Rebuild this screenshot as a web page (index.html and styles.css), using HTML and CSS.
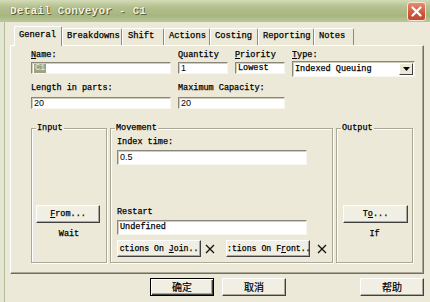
FILE: index.html
```html
<!DOCTYPE html>
<html lang="zh">
<head>
    <meta charset="UTF-8">
    <title>Detail Conveyor - C1</title>
    <link rel="stylesheet" href="styles.css">
</head>
<body>
    <div class="window">
        <div class="titlebar">
            <span class="title">Detail Conveyor - C1</span>
            <span class="close-btn">
                <svg width="11" height="11" viewBox="0 0 11 11"><path d="M1.5 1.5 L9.5 9.5 M9.5 1.5 L1.5 9.5" stroke="#fff" stroke-width="2.2" stroke-linecap="round"/></svg>
            </span>
        </div>

        <div class="client">
            <div class="tabs">
                <div class="tab active w-general">General</div>
                <div class="tab w-breakdowns">Breakdowns</div>
                <div class="tab w-shift">Shift</div>
                <div class="tab w-actions">Actions</div>
                <div class="tab w-costing">Costing</div>
                <div class="tab w-reporting">Reporting</div>
                <div class="tab w-notes">Notes</div>
            </div>

            <div class="panel">
                <div class="row-top">
                    <label class="lbl"><u>N</u>ame:</label>
                    <label class="lbl">Quantity</label>
                    <label class="lbl"><u>P</u>riority</label>
                    <label class="lbl"><u>T</u>ype:</label>
                    <div class="field"><span class="selected-text">C1</span></div>
                    <div class="field num">1</div>
                    <div class="field">Lowest</div>
                    <div class="select">
                        <span>Indexed Queuing</span>
                        <span class="drop-btn">
                            <svg width="7" height="4" viewBox="0 0 7 4"><path d="M0 0 H7 L3.5 4 Z" fill="#000"/></svg>
                        </span>
                    </div>
                </div>

                <div class="row-second">
                    <label class="lbl">Length in parts:</label>
                    <label class="lbl">Maximum Capacity:</label>
                    <div class="field num">20</div>
                    <div class="field num">20</div>
                </div>

                <div class="groups">
                    <fieldset class="group group-input">
                        <legend>Input</legend>
                        <button class="btn side-btn"><u>F</u>rom...</button>
                        <div class="state">Wait</div>
                    </fieldset>

                    <fieldset class="group group-movement">
                        <legend>Movement</legend>
                        <div class="movement-body">
                            <label class="lbl">Index time:</label>
                            <div class="field tall num">0.5</div>
                            <label class="lbl restart-lbl">Restart</label>
                            <div class="field tall">Undefined</div>
                            <div class="action-row">
                                <button class="btn action-btn">ctions On <u>J</u>oin..</button>
                                <span class="clear-x">
                                    <svg width="10" height="10" viewBox="0 0 10 10"><path d="M1 1 L9 9 M9 1 L1 9" stroke="#111" stroke-width="1.3"/></svg>
                                </span>
                                <button class="btn action-btn second">:tions On F<u>r</u>ont..</button>
                                <span class="clear-x">
                                    <svg width="10" height="10" viewBox="0 0 10 10"><path d="M1 1 L9 9 M9 1 L1 9" stroke="#111" stroke-width="1.3"/></svg>
                                </span>
                            </div>
                        </div>
                    </fieldset>

                    <fieldset class="group group-output">
                        <legend>Output</legend>
                        <button class="btn side-btn to-btn">T<u>o</u>...</button>
                        <div class="state">If</div>
                    </fieldset>
                </div>
            </div>

            <div class="dialog-buttons">
                <button class="btn dlg-btn default">确定</button>
                <button class="btn dlg-btn">取消</button>
                <button class="btn dlg-btn help">帮助</button>
            </div>
        </div>
    </div>
</body>
</html>
```

FILE: styles.css
```css
* {
    margin: 0;
    padding: 0;
    box-sizing: border-box;
}

body {
    width: 430px;
    height: 302px;
    overflow: hidden;
    background: #ece9d8;
    font-family: 'Liberation Mono', 'DejaVu Sans Mono', monospace;
    font-size: 8.5px;
    color: #000;
    -webkit-text-stroke: 0.25px #000;
}

.window {
    height: 302px;
    display: flex;
    flex-direction: column;
}

.titlebar {
    height: 22px;
    display: flex;
    align-items: center;
    padding: 0 4px 0 10px;
    background: linear-gradient(#d3dbb6, #b5c190 30%, #a7b57f 70%, #bac69b);
}

.title {
    font-weight: bold;
    font-size: 11px;
    color: #f4f1de;
    -webkit-text-stroke: 0;
    text-shadow: 1px 1px 0 #56603a, -0.5px -0.5px 0 #7b8658;
    letter-spacing: 0.2px;
}

.close-btn {
    margin-left: auto;
    width: 19px;
    height: 19px;
    border: 1px solid #f3e6d8;
    border-radius: 3px;
    background: linear-gradient(#e98a70, #d0553a 60%, #c24a30);
    display: flex;
    align-items: center;
    justify-content: center;
}

.client {
    flex: 1;
    padding: 0 6px 0 10px;
    background: linear-gradient(to right, #e3e7d4 0 4px, #b4bd9a 4px 5px, #ece9d8 5px);
}

/* tabs */
.tabs {
    display: flex;
    align-items: flex-end;
    height: 23px;
    padding-left: 4px;
}

.tab {
    height: 17px;
    line-height: 15px;
    padding-left: 4px;
    font-size: 8.8px;
    border-top: 1px solid #fff;
    border-left: 1px solid #fff;
    border-right: 1px solid #8d8a7e;
    border-radius: 2px 2px 0 0;
    white-space: nowrap;
}

.tab.active {
    height: 20px;
    line-height: 17px;
    margin-bottom: -1px;
    position: relative;
    z-index: 1;
    background: #ece9d8;
}

.w-general { width: 48px; }
.w-breakdowns { width: 60px; }
.w-shift { width: 42px; padding-left: 5px; }
.w-actions { width: 46px; }
.w-costing { width: 48px; }
.w-reporting { width: 56px; }
.w-notes { width: 40px; }

/* panel */
.panel {
    width: 414px;
    height: 229px;
    border: 1px solid;
    border-color: #fff #716f64 #716f64 #fff;
    box-shadow: inset -1px -1px 0 #aca899;
    padding: 4px 0 0 20px;
}

.lbl {
    display: block;
    height: 11px;
    line-height: 11px;
    white-space: nowrap;
    overflow: hidden;
}

.field {
    height: 12px;
    background: #fff;
    border: 1px solid;
    border-color: #8a877a #f6f5ee #f6f5ee #8a877a;
    box-shadow: inset 1px 1px 0 #cfccbd;
    padding-left: 2px;
    line-height: 10px;
    white-space: nowrap;
    overflow: hidden;
}

.field.num {
    font-family: 'Liberation Sans', Arial, sans-serif;
    font-size: 9px;
    -webkit-text-stroke: 0;
}

.field.tall {
    height: 15px;
    width: 190px;
    line-height: 13px;
}

.selected-text {
    display: inline-block;
    background: #9ea384;
    color: #eceedd;
    -webkit-text-stroke: 0;
    padding: 0 1px;
    line-height: 9px;
}

.row-top {
    display: grid;
    grid-template-columns: 140px 50px 50px 123px;
    grid-template-rows: 11px 12px;
    column-gap: 7px;
    row-gap: 1px;
}

.select {
    height: 16px;
    margin-top: -1px;
    display: flex;
    align-items: center;
    background: #fff;
    border: 1px solid;
    border-color: #8a877a #f6f5ee #f6f5ee #8a877a;
    box-shadow: inset 1px 1px 0 #cfccbd;
    padding-left: 2px;
    white-space: nowrap;
}

.drop-btn {
    margin-left: auto;
    margin-right: 1px;
    width: 14px;
    height: 12px;
    background: #ece9d8;
    border: 1px solid;
    border-color: #fff #404040 #404040 #fff;
    display: flex;
    align-items: center;
    justify-content: center;
}

.row-second {
    display: grid;
    grid-template-columns: 140px 107px;
    grid-template-rows: 11px 12px;
    column-gap: 7px;
    row-gap: 3px;
    margin-top: 9px;
}

/* groups */
.groups {
    display: flex;
    gap: 3px;
    margin-top: 14px;
}

.group {
    height: 140px;
    border: 1px solid #aca899;
    box-shadow: inset 1px 1px 0 #fff, 1px 1px 0 #fff;
    padding: 0 4px;
    display: flex;
    flex-direction: column;
}

.group legend {
    padding: 0 1px;
    line-height: 10px;
    font-size: 8.5px;
}

.group-input { width: 76px; }
.group-movement { width: 223px; }
.group-output { width: 77px; }

.btn {
    font-family: 'Liberation Mono', 'DejaVu Sans Mono', monospace;
    font-size: 8.5px;
    color: #000;
    background: #f1efe4;
    border: 1px solid;
    border-color: #fff #404040 #404040 #fff;
    box-shadow: inset -1px -1px 0 #aca899;
    white-space: nowrap;
    overflow: hidden;
    padding: 0;
}

.side-btn {
    width: 64px;
    height: 18px;
    margin-top: 72px;
}

.to-btn {
    width: 65px;
    margin-left: 2px;
}

.state {
    margin-top: 6px;
    line-height: 10px;
    text-align: center;
}

.movement-body {
    padding: 4px 0 0 2px;
}

.movement-body .field.tall {
    margin-top: 3px;
}

.restart-lbl {
    margin-top: 42px;
    height: 10px;
    line-height: 10px;
}

.movement-body .lbl:first-child {
    height: 10px;
    line-height: 10px;
}

.action-row {
    display: flex;
    align-items: center;
    margin-top: 5px;
}

.action-btn {
    width: 84px;
    height: 17px;
    text-align: center;
    font-size: 8.2px;
}

.action-btn.second {
    margin-left: 11px;
}

.clear-x {
    display: flex;
    margin-left: 4px;
}

.action-btn.second + .clear-x {
    margin-left: 7px;
}

/* dialog buttons */
.dialog-buttons {
    display: flex;
    gap: 8px;
    margin-top: 4px;
    padding-left: 140px;
}

.dlg-btn {
    width: 64px;
    height: 18px;
    font-family: 'Noto Sans CJK SC', sans-serif;
    font-size: 10px;
    line-height: 14px;
    -webkit-text-stroke: 0.2px #000;
}

.dlg-btn.default {
    border-color: #000;
    box-shadow: inset 1px 1px 0 #fff, inset -1px -1px 0 #404040, inset -2px -2px 0 #aca899;
}

.dlg-btn.help {
    margin-left: auto;
}
```
